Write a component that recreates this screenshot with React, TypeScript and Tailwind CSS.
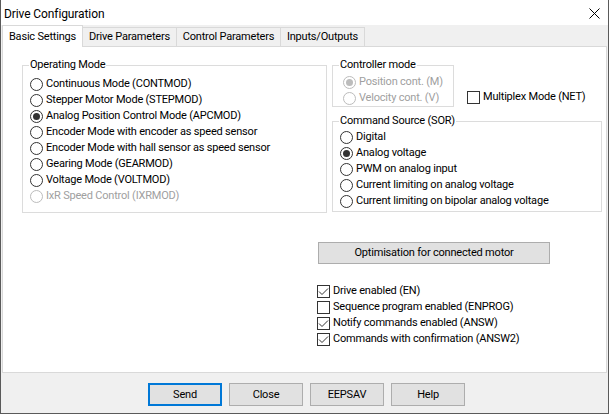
import React from "react";

function Radio({ label, checked = false, disabled = false }: { label: string; checked?: boolean; disabled?: boolean }) {
  return (
    <div className="flex items-center h-[16px] whitespace-nowrap">
      <span
        className={
          disabled
            ? "w-[13px] h-[13px] shrink-0 rounded-full border border-[#bcbcbc] bg-white flex items-center justify-center"
            : "w-[13px] h-[13px] shrink-0 rounded-full border border-[#333333] bg-white flex items-center justify-center"
        }
      >
        {checked && (
          <span className={disabled ? "w-[7px] h-[7px] rounded-full bg-[#bcbcbc]" : "w-[7px] h-[7px] rounded-full bg-[#333333]"} />
        )}
      </span>
      <span className={disabled ? "ml-[3px] text-[#a0a0a0]" : "ml-[3px] text-black"}>{label}</span>
    </div>
  );
}

function Check({ label, checked = false }: { label: string; checked?: boolean }) {
  return (
    <div className="flex items-center h-[16px] whitespace-nowrap">
      <span className="w-[13px] h-[13px] shrink-0 border border-[#333333] bg-white flex items-center justify-center">
        {checked && (
          <svg width="11" height="11" viewBox="0 0 11 11">
            <path d="M1 5.5 L4 8.5 L10 2.5" stroke="#333333" strokeWidth="1" fill="none" />
          </svg>
        )}
      </span>
      <span className="ml-[3px] text-black">{label}</span>
    </div>
  );
}

function Group({ label, className, children }: { label: string; className: string; children: React.ReactNode }) {
  return (
    <div className={"relative border border-[#dcdcdc] " + className}>
      <span className="absolute left-[6px] -top-[9px] bg-white px-[1px] leading-[16px] whitespace-nowrap text-black">{label}</span>
      {children}
    </div>
  );
}

function Btn({ label, primary = false }: { label: string; primary?: boolean }) {
  return (
    <div
      className={
        primary
          ? "w-[74px] h-[23px] bg-[#e1e1e1] border-2 border-[#0078d7] flex items-center justify-center text-black"
          : "w-[74px] h-[23px] bg-[#e1e1e1] border border-[#adadad] flex items-center justify-center text-black"
      }
    >
      {label}
    </div>
  );
}

export default function App() {
  return (
    <div className="w-[610px] h-[415px] bg-white font-['Roboto'] text-[11px] tracking-[-0.2px] leading-[16px] text-black">
      <div className="w-[609px] h-[414px] bg-[#f0f0f0] border-l border-r border-b border-[#5a5a5a] flex flex-col">
        {/* Title bar */}
        <div className="h-[25px] shrink-0 bg-white flex items-center justify-between pl-[3px] pr-[8px] pt-[2px]">
          <span className="text-[12px] tracking-[-0.1px]">Drive Configuration</span>
          <svg width="11" height="11" viewBox="0 0 11 11">
            <path d="M0.5 0.5 L10.5 10.5 M10.5 0.5 L0.5 10.5" stroke="#000000" strokeWidth="1" fill="none" />
          </svg>
        </div>

        {/* Tabs */}
        <div className="h-[21px] shrink-0 flex items-end pl-[1px]">
          <div className="relative z-10 -mb-[1px] w-[81px] h-[22px] bg-white border-l border-t border-r border-[#d9d9d9] flex items-center justify-center whitespace-nowrap">
            Basic Settings
          </div>
          <div className="w-[94px] h-[19px] border-t border-r border-[#d9d9d9] flex items-center justify-center whitespace-nowrap">
            Drive Parameters
          </div>
          <div className="w-[104px] h-[19px] border-t border-r border-[#d9d9d9] flex items-center justify-center whitespace-nowrap">
            Control Parameters
          </div>
          <div className="w-[84px] h-[19px] border-t border-r border-[#d9d9d9] flex items-center justify-center whitespace-nowrap">
            Inputs/Outputs
          </div>
        </div>

        {/* Panel */}
        <div className="ml-[1px] w-[605px] h-[327px] shrink-0 bg-white border border-[#d9d9d9] pt-[18px] pl-[19px] flex flex-col">
          <div className="flex items-start">
            <Group label="Operating Mode" className="w-[305px] h-[148px] pt-[10px] pl-[7px]">
              <Radio label="Continuous Mode (CONTMOD)" />
              <Radio label="Stepper Motor Mode (STEPMOD)" />
              <Radio label="Analog Position Control Mode (APCMOD)" checked />
              <Radio label="Encoder Mode with encoder as speed sensor" />
              <Radio label="Encoder Mode with hall sensor as speed sensor" />
              <Radio label="Gearing Mode (GEARMOD)" />
              <Radio label="Voltage Mode (VOLTMOD)" />
              <Radio label="IxR Speed Control (IXRMOD)" disabled />
            </Group>

            <div className="ml-[5px] flex flex-col">
              <div className="flex items-start">
                <Group label="Controller mode" className="w-[122px] h-[42px] pt-[8px] pl-[10px]">
                  <Radio label="Position cont. (M)" checked disabled />
                  <Radio label="Velocity cont. (V)" disabled />
                </Group>
                <div className="ml-[13px] mt-[24px]">
                  <Check label="Multiplex Mode (NET)" />
                </div>
              </div>
              <Group label="Command Source (SOR)" className="mt-[14px] w-[270px] h-[91px] pt-[7px] pl-[7px]">
                <Radio label="Digital" />
                <Radio label="Analog voltage" checked />
                <Radio label="PWM on analog input" />
                <Radio label="Current limiting on analog voltage" />
                <Radio label="Current limiting on bipolar analog voltage" />
              </Group>
            </div>
          </div>

          <div className="ml-[296px] mt-[29px] w-[232px] h-[22px] bg-[#e1e1e1] border border-[#adadad] flex items-center justify-center whitespace-nowrap">
            Optimisation for connected motor
          </div>

          <div className="ml-[295px] mt-[19px] flex flex-col">
            <Check label="Drive enabled (EN)" checked />
            <Check label="Sequence program enabled (ENPROG)" />
            <Check label="Notify commands enabled (ANSW)" checked />
            <Check label="Commands with confirmation (ANSW2)" checked />
          </div>
        </div>

        {/* Bottom buttons */}
        <div className="mt-[10px] pl-[147px] flex gap-[7px]">
          <Btn label="Send" primary />
          <Btn label="Close" />
          <Btn label="EEPSAV" />
          <Btn label="Help" />
        </div>
      </div>
    </div>
  );
}
